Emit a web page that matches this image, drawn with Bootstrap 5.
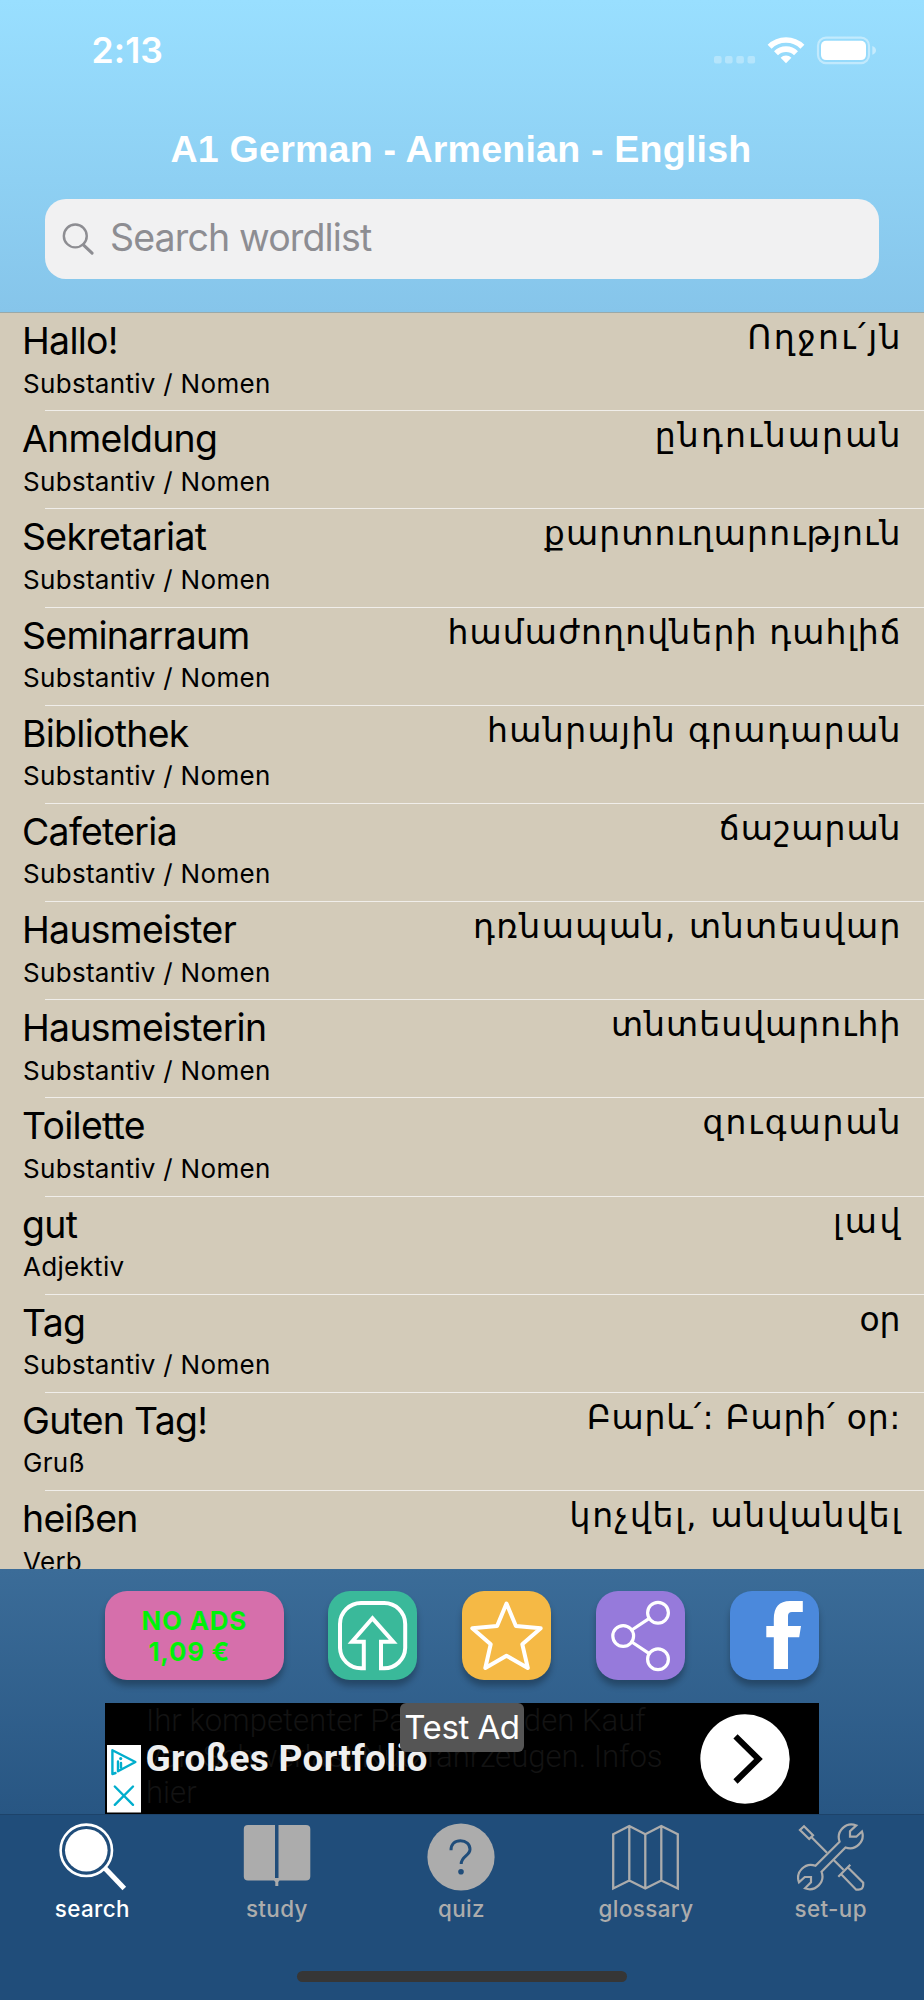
<!DOCTYPE html>
<html lang="de">
<head>
<meta charset="utf-8">
<meta name="viewport" content="width=device-width, initial-scale=1">
<title>A1 German - Armenian - English</title>
<link href="https://cdn.jsdelivr.net/npm/bootstrap@5.3.0/dist/css/bootstrap.min.css" rel="stylesheet">
<style>
  body { font-family: Inter, "Liberation Sans", sans-serif; color: #000; background: #204d7a; }
  .phone { width: 924px; height: 2000px; }
  .top-area { height: 313px; background: linear-gradient(#99dfff, #86c5ea); border-bottom: 1px solid #9aa9a8; }
  .status-row { height: 100px; padding: 0 47px 0 91.5px; }
  .clock { font-size: 35.6px; font-weight: 600; line-height: 101px; letter-spacing: .1px; }
  .app-title { font: 700 37.6px/48px "Liberation Sans", sans-serif; height: 99px; padding: 25px 2px 0 0; letter-spacing: .2px; }
  .search-box { height: 80px; margin: 0 45px; padding-left: 17px; border-radius: 21px; background: #f1f1f2; color: #8d8d92; font-size: 37.5px; letter-spacing: -.85px; }
  .search-box span { margin: 0 0 2px 15px; }
  .word-list { background: #d3cbb9; }
  .word-row { position: relative; height: 98.18px; padding: 5px 23.5px 0 22px; }
  .word-row::after { content: ""; position: absolute; left: 45px; right: 0; bottom: 0; height: 1px; background: #f0eeea; }
  .term { font-size: 37.4px; line-height: 46px; letter-spacing: -.7px; }
  .kind { font-size: 26px; line-height: 32px; letter-spacing: .3px; padding: 3.5px 0 0 1px; }
  .armenian { font: 33px/45px "DejaVu Sans", sans-serif; margin-top: -3px; }
  .tool-area { height: 245px; background: linear-gradient(#3b6c98, #285683); padding: 22px 105px 0; }
  .tool-btn { width: 89.25px; height: 89.25px; border-radius: 22px; box-shadow: 0 6px 6px rgba(0,0,0,.28); }
  .tool-btn svg { display: block; }
  .no-ads { width: 178.5px; background: #d66fab; color: #00f208; font-weight: 700; font-size: 26px; line-height: 31px; letter-spacing: .7px; }
  .price { margin-right: 10px; }
  .ad-box { position: relative; height: 111px; margin-top: 22.75px; background: #000; font-family: Roboto, sans-serif; overflow: hidden; }
  .ad-faint { position: absolute; left: 41px; top: 0; font-weight: 300; font-size: 31.1px; line-height: 36px; color: #131313; white-space: nowrap; }
  .ad-head { position: absolute; left: 40.5px; top: 34px; font-weight: 700; font-size: 37px; line-height: 44px; letter-spacing: .35px; color: #efefef; white-space: nowrap; }
  .ad-tag { position: absolute; left: 295px; top: 0; width: 124px; height: 49px; border-radius: 6px; background: #555; color: #fff; font: 33px/49px Inter, sans-serif; letter-spacing: -.45px; text-align: center; white-space: nowrap; }
  .ad-choice { position: absolute; left: 2px; top: 42px; }
  .ad-go { position: absolute; left: 595px; top: 10.5px; }
  .tab-area { height: 186px; padding-right: 1px; border-top: 1px solid #1d436a; color: #acacac; font-weight: 500; font-size: 22.4px; line-height: 28px; letter-spacing: .4px; }
  .tab-area a { color: inherit; text-decoration: none; padding-top: 8px; }
  .tab-area a.active { color: #fff; }
  .tab-area a.active svg { margin-left: 2px; }
  .tab-area svg { display: block; margin-bottom: 4px; }
  .home-bar { position: absolute; left: 297px; bottom: 18px; width: 330px; height: 11px; border-radius: 6px; background: #363636; }
</style>
</head>
<body>
<div class="phone d-flex flex-column position-relative overflow-hidden">
  <header class="top-area flex-shrink-0">
    <div class="status-row d-flex justify-content-between text-white">
      <span class="clock">2:13</span>
      <svg width="163" height="100" viewBox="714 0 163 100">
        <g fill="#fff" fill-opacity=".3"><rect x="714" y="56" width="7.6" height="7.4" rx="2"/><rect x="725" y="56" width="7.6" height="7.4" rx="2"/><rect x="736.3" y="56" width="7.6" height="7.4" rx="2"/><rect x="747.5" y="56" width="7.6" height="7.4" rx="2"/></g>
        <g fill="none" stroke="#fff" stroke-width="5.6"><path d="M769.6 46.8A23.2 23.2 0 0 1 802.4 46.8" /><path d="M776 53.2A14.2 14.2 0 0 1 796 53.2"/></g>
        <path d="M786 63.3L780.6 57.8A7.6 7.6 0 0 1 791.4 57.8Z" fill="#fff"/>
        <rect x="818" y="37.7" width="51" height="25.4" rx="8" fill="none" stroke="#fff" stroke-opacity=".42" stroke-width="2.2"/>
        <rect x="821" y="40.8" width="45" height="19.3" rx="5" fill="#fff"/>
        <path d="M872.3 46Q876 47.5 876 50.4T872.3 54.8Z" fill="#fff" fill-opacity=".45"/>
      </svg>
    </div>
    <h1 class="app-title text-white text-center m-0">A1 German - Armenian - English</h1>
    <div class="search-box d-flex align-items-center">
      <svg width="33" height="33" viewBox="0 0 34 34" fill="none" stroke="#8d8d92" stroke-width="2.5" stroke-linecap="round"><circle cx="13.7" cy="13.3" r="11.8"/><path d="M22 22.5L31 31" stroke-width="3.2"/></svg>
      <span>Search wordlist</span>
    </div>
  </header>

  <main class="word-list flex-grow-1 overflow-hidden" id="words"></main>

  <section class="tool-area flex-shrink-0">
    <div class="d-flex justify-content-between">
      <div class="tool-btn no-ads d-flex flex-column justify-content-center text-center"><span>NO ADS</span><span class="price">1,09 €</span></div>
      <div class="tool-btn" style="background:#3ab99a"><svg width="89" height="89" viewBox="0 0 89 89" fill="none" stroke="#fff" stroke-width="4"><path d="M35.8 77.3V50.7H24L44.5 27.3L65.2 50.7H53V77.3H56A21 21 0 0 0 77.2 57V33A21 21 0 0 0 56 12H33A21 21 0 0 0 12 33V57A21 21 0 0 0 33 77.3Z"/></svg></div>
      <div class="tool-btn" style="background:#f5b945"><svg width="89" height="89" viewBox="0 0 89 89" fill="none" stroke="#fff" stroke-width="4" stroke-linejoin="round"><path d="M44.5 12.5L53.9 35L78.7 37.3L60.3 53.3L65.8 77L44.5 64.7L23.3 77L28.7 53.3L10.3 37.3L35.1 35Z"/></svg></div>
      <div class="tool-btn" style="background:#967adb"><svg width="89" height="89" viewBox="0 0 89 89" fill="none" stroke="#fff" stroke-width="3.2"><circle cx="27.2" cy="45" r="10.4"/><circle cx="62" cy="21.8" r="10.4"/><circle cx="62" cy="68.2" r="10.4"/><path d="M35.8 39L53.3 27.3M35.8 51L53.3 62.7"/></svg></div>
      <div class="tool-btn" style="background:#4b89dc"><svg width="89" height="89" viewBox="0 0 89 89" fill="#fff"><path d="M43.8 78V46.2H36.3V35H43.8V28Q43.8 10 60 10H72.8V21H62Q58 21 58 25V35H71L69.2 46.2H58V78Z"/></svg></div>
    </div>
    <div class="ad-box">
      <div class="ad-faint">Ihr kompetenter Partner für den Kauf<br>von Schwerlast Nutzfahrzeugen. Infos<br>hier</div>
      <div class="ad-head">Großes Portfolio</div>
      <svg class="ad-choice" width="34" height="68" viewBox="0 0 34 68"><path fill="#fff" d="M0 0H34V67.5H0Z"/><g fill="none" stroke="#00aecd" stroke-width="2.4" stroke-linecap="round" stroke-linejoin="round"><path d="M8.5 28L5.4 29V5.2L28.4 17L11 26.2V16.5M14 18V22.5"/><path d="M7.8 41.5L26 59.8M26 41.5L7.8 59.8"/></g><circle cx="13.7" cy="13.6" r="1.6" fill="#00aecd"/></svg>
      <svg class="ad-go" width="90" height="90" viewBox="0 0 90 90"><circle cx="45" cy="45" r="44.7" fill="#fff"/><path d="M35.5 22.3L58.5 45L35.5 67.5" fill="none" stroke="#000" stroke-width="6"/></svg>
      <div class="ad-tag">Test Ad</div>
    </div>
  </section>

  <nav class="tab-area d-flex flex-shrink-0">
    <a href="#" class="active d-flex flex-column align-items-center w-100"><svg width="68" height="68" viewBox="0 0 68 68"><circle cx="27.3" cy="27.3" r="25.7" fill="none" stroke="currentColor" stroke-width="2.6"/><circle cx="27.3" cy="27.3" r="21.3" fill="currentColor"/><path d="M45.3 44.5L65.3 65.5" stroke="currentColor" stroke-width="5"/></svg>search</a>
    <a href="#" class="d-flex flex-column align-items-center w-100"><svg width="68" height="68" viewBox="0 0 68 68" fill="currentColor"><path d="M5 2H32V55H35.5V2H63Q67.3 2 67.3 6V53.5Q67.3 57.5 63 57.5H36.5L35.3 59V63H32.3V59L31 57.5H5Q.8 57.5 .8 53.5V6Q.8 2 5 2Z"/></svg>study</a>
    <a href="#" class="d-flex flex-column align-items-center w-100"><svg width="68" height="68" viewBox="0 0 68 68"><circle cx="34" cy="34" r="33.6" fill="currentColor"/><path d="M24 27.3C24 21 28 17.8 33.5 17.8S43 21.3 43 26.3C43 33 34.2 33 34.2 41" fill="none" stroke="#204d7a" stroke-width="3"/><circle cx="34" cy="48.7" r="2.8" fill="#204d7a"/></svg>quiz</a>
    <a href="#" class="d-flex flex-column align-items-center w-100"><svg width="68" height="68" viewBox="0 0 68 68" fill="none" stroke="currentColor" stroke-width="2.3"><path d="M1.2 11.3L17.3 3L33.3 11.3L49.3 3L65.8 11.3V65.5L49.3 57.5L33.3 65.5L17.3 57.5L1.2 65.5ZM17.3 3V57.5M33.3 11.3V65.5M49.3 3V57.5"/></svg>glossary</a>
    <a href="#" class="d-flex flex-column align-items-center w-100"><svg width="68" height="68" viewBox="0 0 68 68" fill="none" stroke="currentColor" stroke-width="2.2"><path d="M59.3 2.4L53 8.3V13.7H59.3L65 8.5A12.8 12.8 0 0 1 48.5 24.5L24.5 48.7A12.8 12.8 0 0 1 8 65.3L14 59.3V54H7.8L2 59.3A12.8 12.8 0 0 1 18.5 42.8L42.6 18.7A12.8 12.8 0 0 1 59.3 2.4Z"/><path d="M7 3.3L16 12.3L12.2 16L3 7ZM14.3 14L30 29.7M36.7 37L46.5 46.8M53.3 41.7L41.3 53.7M50.7 44.3L66.2 59.8V62Q66 66.5 61.5 66.7H59.2L44 51"/></svg>set-up</a>
  </nav>
  <div class="home-bar"></div>
</div>
<script>
  // term, word class, translation, tracking of the translation in px
  const words = [
    ["Hallo!", "Substantiv / Nomen", "Ողջու՛յն", 2.4],
    ["Anmeldung", "Substantiv / Nomen", "ընդունարան", 2.2],
    ["Sekretariat", "Substantiv / Nomen", "քարտուղարություն", 1.1],
    ["Seminarraum", "Substantiv / Nomen", "համաժողովների դահլիճ", 1.15],
    ["Bibliothek", "Substantiv / Nomen", "հանրային գրադարան", 1.4],
    ["Cafeteria", "Substantiv / Nomen", "ճաշարան", 1],
    ["Hausmeister", "Substantiv / Nomen", "դռնապան, տնտեսվար", 1.5],
    ["Hausmeisterin", "Substantiv / Nomen", "տնտեսվարուհի", 1.05],
    ["Toilette", "Substantiv / Nomen", "զուգարան", 2],
    ["gut", "Adjektiv", "լավ", 2.8],
    ["Tag", "Substantiv / Nomen", "օր", 0],
    ["Guten Tag!", "Gruß", "Բարև՛: Բարի՛ օր:", 0.8],
    ["heißen", "Verb", "կոչվել, անվանվել", 1.75]
  ];
  document.getElementById("words").innerHTML = words.map(([term, kind, arm, gap]) =>
    `<div class="word-row d-flex justify-content-between"><div><div class="term">${term}</div><div class="kind">${kind}</div></div><div class="armenian" lang="hy" style="letter-spacing:${gap}px;margin-right:${-gap}px">${arm}</div></div>`).join("");
</script>
<script src="https://cdn.jsdelivr.net/npm/bootstrap@5.3.0/dist/js/bootstrap.bundle.min.js"></script>
</body>
</html>
